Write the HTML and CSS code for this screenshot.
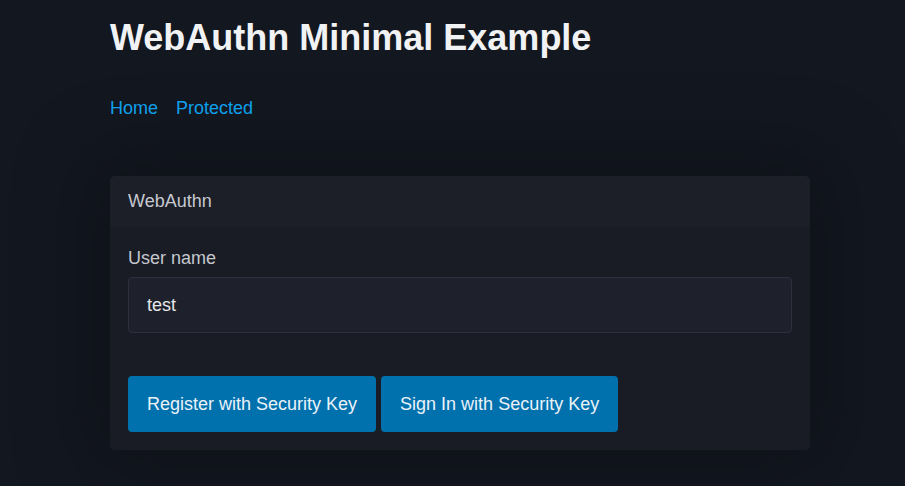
FILE: index.html
```html
<!DOCTYPE html>
<html>
<head>
<meta charset="utf-8">
<link rel="stylesheet" href="styles.css">
</head>
<body>
<div class="page">
  <h1 class="title">WebAuthn Minimal Example</h1>
  <nav class="nav">
    <a href="#" class="nav-link">Home</a>
    <a href="#" class="nav-link">Protected</a>
  </nav>
  <div class="card">
    <div class="card-header">WebAuthn</div>
    <div class="card-body">
      <label class="label">User name</label>
      <div class="input">test</div>
      <div class="actions">
        <button class="btn">Register with Security Key</button>
        <button class="btn">Sign In with Security Key</button>
      </div>
    </div>
  </div>
</div>
</body>
</html>
```
FILE: styles.css
```css
html, body {
  margin: 0;
  padding: 0;
  background: #131720;
  font-family: "Liberation Sans", Arial, sans-serif;
  height: 100%;
}
.page {
  width: 700px;
  padding-left: 110px;
  padding-top: 14px;
}
.title {
  margin: 0;
  font-size: 36px;
  font-weight: bold;
  color: #f1f2f4;
  line-height: 48px;
}
.nav {
  display: flex;
  gap: 18px;
  margin-top: 34px;
}
.nav-link {
  color: #0ea0ec;
  text-decoration: none;
  font-size: 18px;
  line-height: 24px;
}
.card {
  margin-top: 56px;
  background: #191c24;
  border-radius: 5px;
  box-shadow: 0 0 80px 20px rgba(0, 0, 0, 0.25);
  overflow: hidden;
}
.card-header {
  background: #1c1f28;
  height: 50px;
  display: flex;
  align-items: center;
  padding: 0 18px;
  color: #c6c9d0;
  font-size: 18px;
}
.card-body {
  padding: 20px 18px 18px;
  display: flex;
  flex-direction: column;
}
.label {
  color: #c4c7ce;
  font-size: 18px;
  line-height: 24px;
  margin-bottom: 7px;
}
.input {
  height: 54px;
  border: 1px solid #2c303e;
  border-radius: 4px;
  background: #1e212b;
  color: #e6e7ea;
  font-size: 18px;
  display: flex;
  align-items: center;
  padding: 0 18px;
}
.actions {
  display: flex;
  gap: 5px;
  margin-top: 43px;
}
.btn {
  height: 56px;
  padding: 0 19px;
  background: #0071ad;
  color: #eaf2f8;
  border: none;
  border-radius: 4px;
  font-family: "Liberation Sans", Arial, sans-serif;
  font-size: 18px;
}
```
